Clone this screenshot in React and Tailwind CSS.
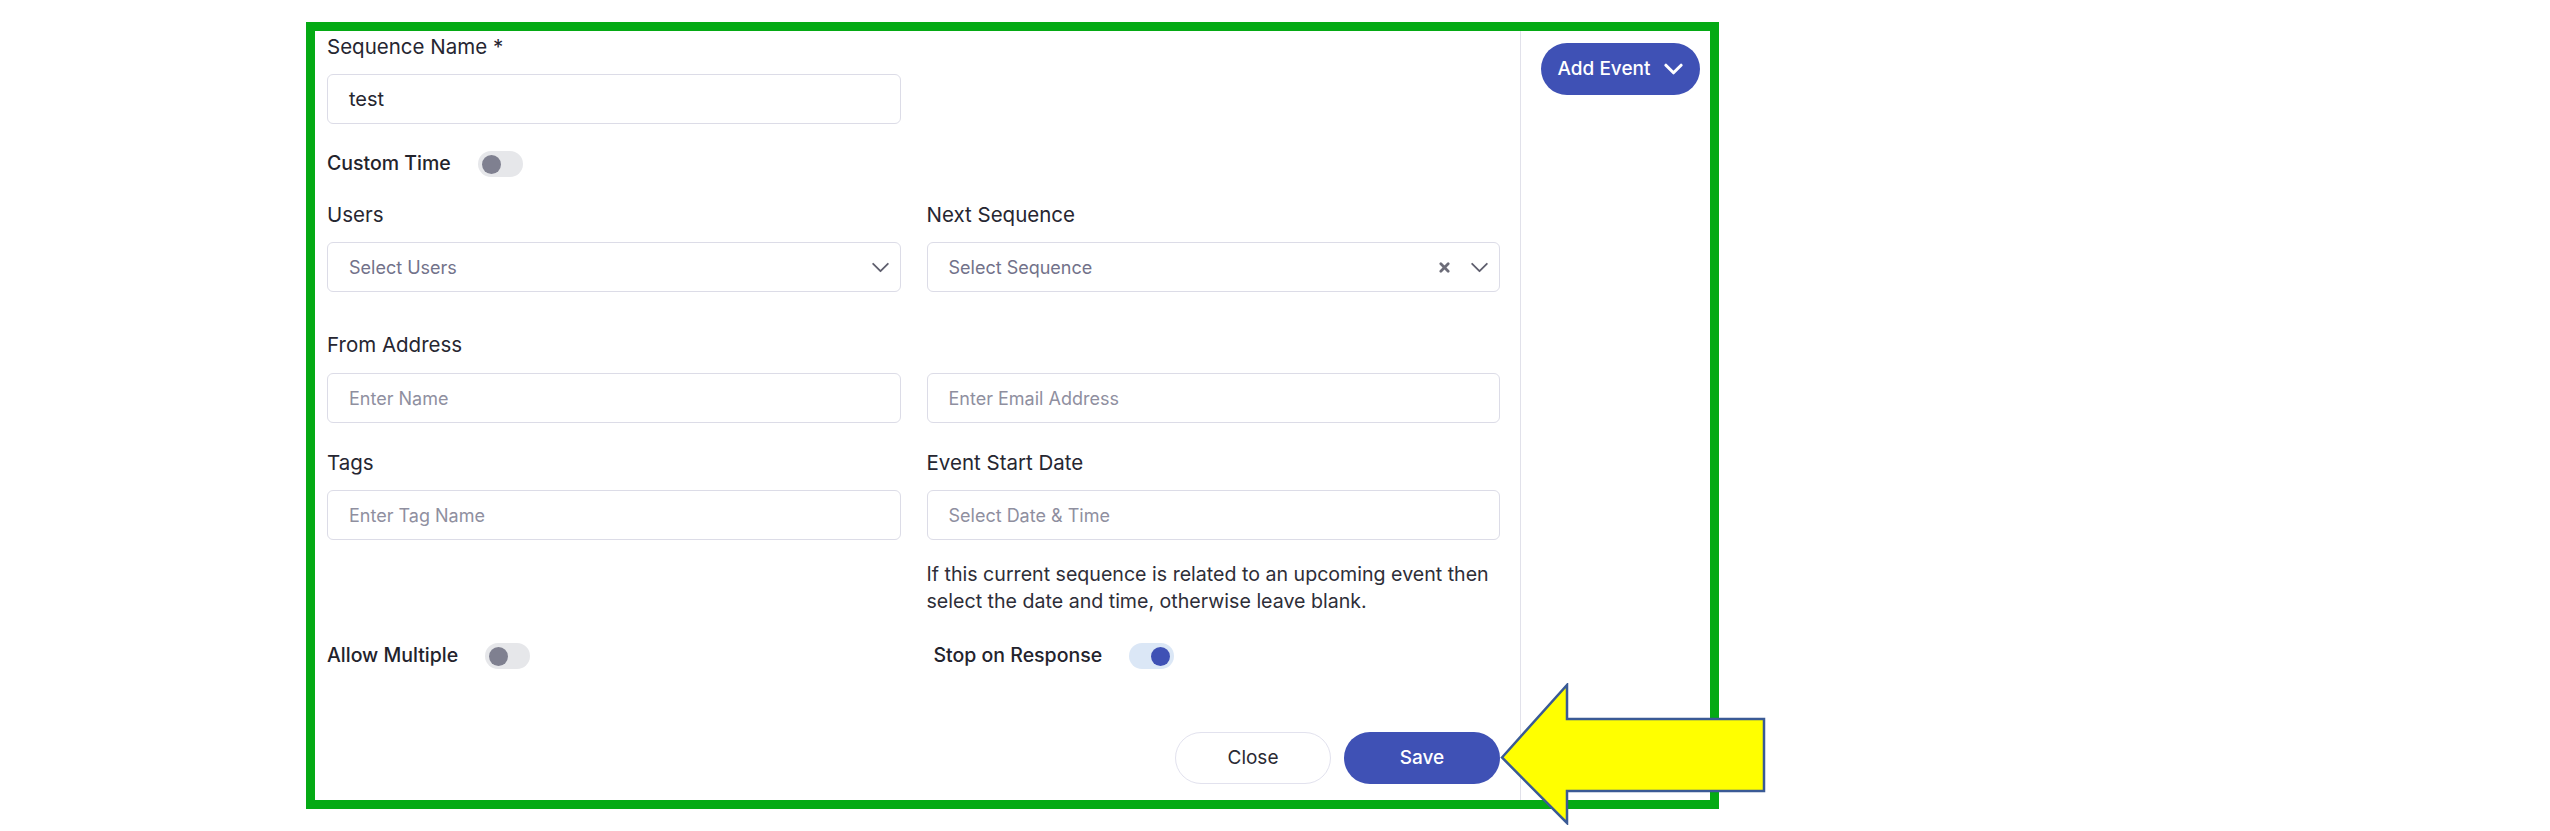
import React from 'react';

const font = { fontFamily: 'Inter, "Open Sans", sans-serif' };

function Chevron({ className = '', color = '#5f5f6e', width = 2 }) {
  return (
    <svg viewBox="0 0 20 12" className={className} fill="none">
      <path d="M2 2l8 8 8-8" stroke={color} strokeWidth={width} strokeLinecap="round" strokeLinejoin="round" />
    </svg>
  );
}

function Toggle({ on = false }) {
  return (
    <span
      className={`relative inline-flex h-[26px] w-[45px] shrink-0 items-center rounded-full px-[4px] ${
        on ? 'justify-end bg-[#dbe7f6]' : 'justify-start bg-[#e6e7ea]'
      }`}
    >
      <span className={`h-[19px] w-[19px] rounded-full ${on ? 'bg-[#3f51b5]' : 'bg-[#7f8090]'}`} />
    </span>
  );
}

function Label({ children }) {
  return <div className="h-[30px] text-[20.5px] leading-[30px] text-[#262631]">{children}</div>;
}

function TextBox({ placeholder, value }) {
  return (
    <div className="mt-3 flex h-[50px] items-center rounded-[6px] border border-[#dcdce7] bg-white pl-[21px]">
      {value ? (
        <span className="text-[20px] text-[#26262f]">{value}</span>
      ) : (
        <span className="text-[18px] text-[#8f8f9f]">{placeholder}</span>
      )}
    </div>
  );
}

function SelectBox({ placeholder, clearable }) {
  return (
    <div className="mt-3 flex h-[50px] items-center rounded-[6px] border border-[#dcdce7] bg-white pl-[21px] pr-[10px]">
      <span className="flex-1 text-[18px] text-[#72728a]">{placeholder}</span>
      {clearable && (
        <svg viewBox="0 0 12 12" className="mr-[20px] h-[11px] w-[11px]">
          <path d="M2 2l8 8M10 2l-8 8" stroke="#6c6c78" strokeWidth="3" strokeLinecap="round" />
        </svg>
      )}
      <Chevron className="h-[11px] w-[19px]" />
    </div>
  );
}

export default function App() {
  return (
    <div className="relative min-h-screen bg-white" style={font}>
      <div className="ml-[306px] pt-[22px]">
        <div className="flex h-[787px] w-[1413px] border-[9px] border-[#04aa14] bg-white">
          {/* form */}
          <div className="flex flex-1 flex-col pl-3 pr-5 pt-px">
            <div className="grid grid-cols-2 gap-x-[26px]">
              <div>
                <Label>Sequence Name *</Label>
                <TextBox value="test" />
              </div>
            </div>

            <div className="mt-[27px] flex h-[26px] items-center gap-[27px]">
              <span className="text-[19.5px] font-medium text-[#23232c]">Custom Time</span>
              <Toggle />
            </div>

            <div className="mt-[23px] grid grid-cols-2 gap-x-[26px]">
              <div>
                <Label>Users</Label>
                <SelectBox placeholder="Select Users" />
              </div>
              <div>
                <Label>Next Sequence</Label>
                <SelectBox placeholder="Select Sequence" clearable />
              </div>
            </div>

            <div className="mt-[38px]">
              <Label>From Address</Label>
            </div>
            <div className="mt-[1px] grid grid-cols-2 gap-x-[26px]">
              <TextBox placeholder="Enter Name" />
              <TextBox placeholder="Enter Email Address" />
            </div>

            <div className="mt-[25px] grid grid-cols-2 gap-x-[26px]">
              <div>
                <Label>Tags</Label>
                <TextBox placeholder="Enter Tag Name" />
              </div>
              <div>
                <Label>Event Start Date</Label>
                <TextBox placeholder="Select Date & Time" />
                <p className="mt-[21px] whitespace-nowrap text-[19.6px] leading-[27px] text-[#2e2e38]">
                  If this current sequence is related to an upcoming event then
                  <br />
                  select the date and time, otherwise leave blank.
                </p>
              </div>
            </div>

            <div className="mt-[28px] grid grid-cols-2 gap-x-[26px]">
              <div className="flex h-[26px] items-center gap-[27px]">
                <span className="text-[19.5px] font-medium text-[#23232c]">Allow Multiple</span>
                <Toggle />
              </div>
              <div className="flex h-[26px] items-center gap-[27px] pl-[7px]">
                <span className="text-[19.5px] font-medium text-[#23232c]">Stop on Response</span>
                <Toggle on />
              </div>
            </div>

            <div className="mt-[63px] flex justify-end gap-[13px]">
              <button className="h-[52px] w-[156px] rounded-full border border-[#e2e2ee] bg-white text-[19px] text-[#2a2a33]">
                Close
              </button>
              <button className="h-[52px] w-[156px] rounded-full bg-[#3f51b5] text-[19px] font-medium text-white">
                Save
              </button>
            </div>
          </div>

          {/* sidebar */}
          <div className="w-[190px] border-l border-[#e1e1ea] pl-5 pt-3">
            <button className="flex h-[52px] w-[159px] items-center justify-center gap-[14px] rounded-full bg-[#3f51b5] text-[19px] font-medium text-white">
              Add Event
              <Chevron className="h-[12px] w-[19px]" color="#ffffff" width={3.2} />
            </button>
          </div>
        </div>
      </div>

      {/* highlight arrow */}
      <svg
        className="absolute left-[1500px] top-[683px]"
        width="266"
        height="142"
        viewBox="0 0 266 142"
      >
        <polygon
          points="2,74.5 67,2 67,36 264,36 264,108 67,108 67,140"
          fill="#ffff00"
          stroke="#3a5a95"
          strokeWidth="2.5"
          strokeLinejoin="miter"
        />
      </svg>
    </div>
  );
}
